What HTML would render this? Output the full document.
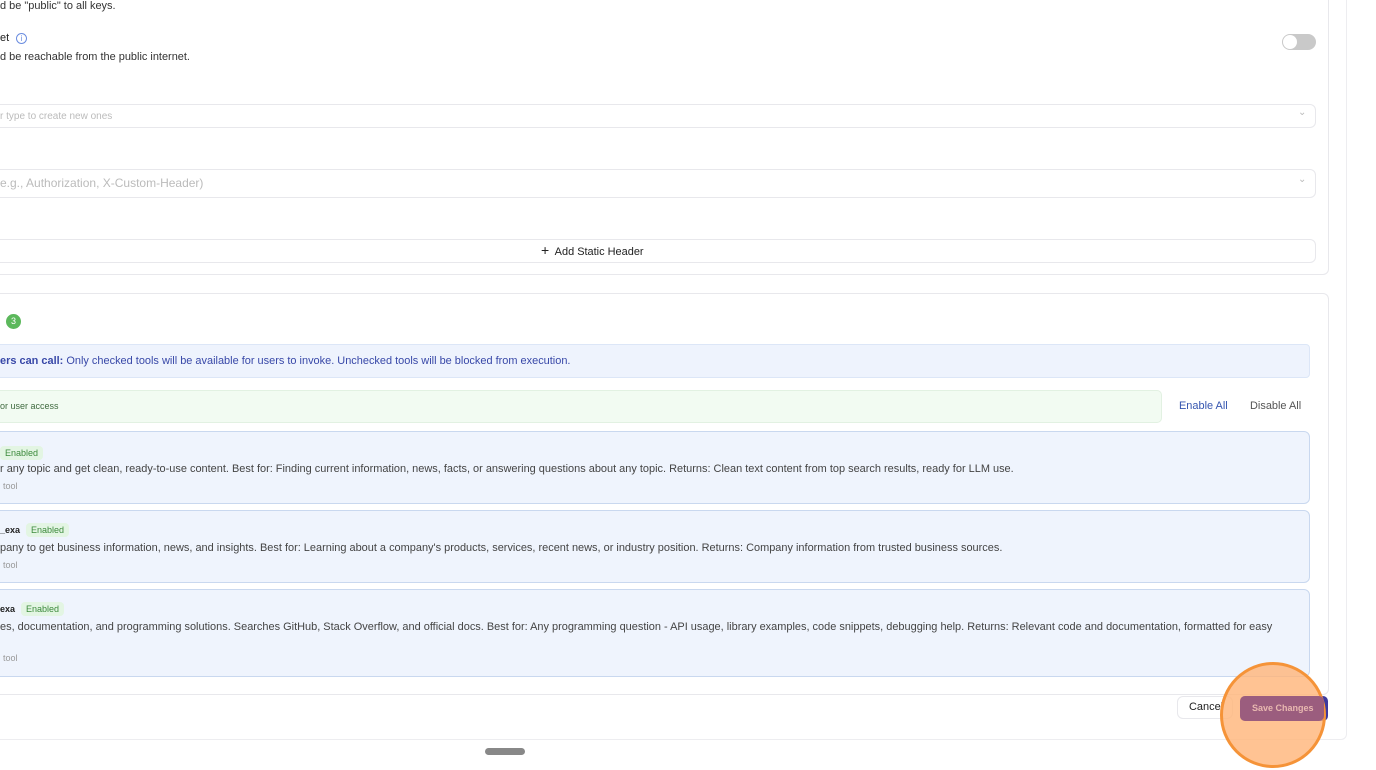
<!DOCTYPE html>
<html><head><style>
*{box-sizing:border-box;margin:0;padding:0}
body{width:1376px;height:770px;background:#fff;font-family:"Liberation Sans",sans-serif;position:relative;overflow:hidden;color:#222}
.a{position:absolute;white-space:nowrap}
.box{position:absolute;border:1px solid #e8e8ec;border-radius:6px;background:#fff}
.t12{font-size:10.96px}
.tool{position:absolute;left:-8px;width:1318px;background:#eff4fd;border:1px solid #c9d8ef;border-radius:6px}
.en{display:inline-block;background:#e3f5e3;color:#3c8a3c;font-size:9px;padding:2px 5px;border-radius:4px;margin-left:6px}
</style></head><body>
<div class="box" style="left:-10px;top:-10px;width:1357px;height:750px;border-color:#ededf0"></div>
<div class="box" style="left:-10px;top:-10px;width:1339px;height:285px"></div>
<div class="a t12" style="left:0;top:0;color:#333">d be "public" to all keys.</div>
<div class="a t12" style="left:0;top:32px;color:#222">et <span style="display:inline-block;width:11px;height:11px;border:1px solid #6b8de0;border-radius:50%;color:#6b8de0;font-size:8px;text-align:center;line-height:9px;margin-left:4px">i</span></div>
<div class="a t12" style="left:0;top:51px;color:#333">d be reachable from the public internet.</div>
<div style="position:absolute;left:1282px;top:34px;width:34px;height:16px;background:#c9c9c9;border-radius:8px"><div style="position:absolute;left:1px;top:1px;width:14px;height:14px;background:#fff;border-radius:50%"></div></div>
<div class="box" style="left:-10px;top:104px;width:1326px;height:24px"></div>
<div class="a" style="left:0;top:111px;font-size:10px;color:#bbb">r type to create new ones</div>
<div class="a" style="left:1298px;top:107px;font-size:10px;color:#bbb">⌄</div>
<div class="box" style="left:-10px;top:169px;width:1326px;height:29px"></div>
<div class="a" style="left:0;top:176px;font-size:12px;color:#bbb">e.g., Authorization, X-Custom-Header)</div>
<div class="a" style="left:1298px;top:174px;font-size:10px;color:#bbb">⌄</div>
<div class="box" style="left:-10px;top:239px;width:1326px;height:24px"></div>
<div class="a t12" style="left:541px;top:245px;color:#222"><span style="font-size:14px;line-height:10px">+</span>&nbsp; Add Static Header</div>

<div class="box" style="left:-10px;top:293px;width:1339px;height:402px"></div>
<div class="a" style="left:6px;top:314px;width:15px;height:15px;background:#5cb85c;border-radius:50%;color:#fff;font-size:9px;text-align:center;line-height:15px">3</div>
<div class="a" style="left:-8px;top:344px;width:1318px;height:34px;background:#eef3fd;border:1px solid #dce6f7;border-radius:4px"></div>
<div class="a t12" style="left:0;top:355px;color:#3848a8"><b>ers can call:</b> Only checked tools will be available for users to invoke. Unchecked tools will be blocked from execution.</div>
<div class="a" style="left:-8px;top:390px;width:1170px;height:33px;background:#f2fbf2;border:1px solid #e2f1e2;border-radius:5px"></div>
<div class="a" style="left:0;top:401px;font-size:9px;color:#3f6a3f">or user access</div>
<div class="a t12" style="left:1179px;top:400px;color:#3656b0">Enable All</div>
<div class="a t12" style="left:1250px;top:400px;color:#555">Disable All</div>

<div class="tool" style="top:431px;height:73px"></div>
<div class="a" style="left:-6px;top:443px"><span class="en">Enabled</span></div>
<div class="a t12" style="left:0;top:463px;color:#444">r any topic and get clean, ready-to-use content. Best for: Finding current information, news, facts, or answering questions about any topic. Returns: Clean text content from top search results, ready for LLM use.</div>
<div class="a" style="left:3px;top:481px;font-size:9px;color:#999">tool</div>

<div class="tool" style="top:510px;height:73px"></div>
<div class="a" style="left:0;top:523px;font-size:9px;font-weight:bold;color:#222">_exa<span class="en" style="font-weight:normal">Enabled</span></div>
<div class="a t12" style="left:0;top:542px;color:#444">pany to get business information, news, and insights. Best for: Learning about a company's products, services, recent news, or industry position. Returns: Company information from trusted business sources.</div>
<div class="a" style="left:3px;top:560px;font-size:9px;color:#999">tool</div>

<div class="tool" style="top:589px;height:88px"></div>
<div class="a" style="left:0;top:602px;font-size:9px;font-weight:bold;color:#222">exa<span class="en" style="font-weight:normal">Enabled</span></div>
<div class="a t12" style="left:0;top:621px;color:#444">es, documentation, and programming solutions. Searches GitHub, Stack Overflow, and official docs. Best for: Any programming question - API usage, library examples, code snippets, debugging help. Returns: Relevant code and documentation, formatted for easy</div>
<div class="a" style="left:3px;top:653px;font-size:9px;color:#999">tool</div>

<div class="box" style="left:1177px;top:696px;width:56px;height:23px"></div>
<div class="a t12" style="left:1189px;top:701px;color:#222">Cancel</div>
<div class="a" style="left:1240px;top:696px;width:88px;height:25px;background:#3d3a9e;border-radius:5px"></div>
<div class="a" style="left:1220px;top:662px;width:106px;height:106px;border-radius:50%;background:rgba(255,180,120,0.8);border:3px solid #f59338"></div>
<div class="a" style="left:1240px;top:696px;width:84px;height:25px;background:#9b5d7e;border-radius:5px"></div>
<div class="a" style="left:1252px;top:703px;font-size:9px;color:#e8b8b0;font-weight:bold">Save Changes</div>
<div class="a" style="left:485px;top:748px;width:40px;height:7px;background:#888;border-radius:4px"></div>
</body></html>
